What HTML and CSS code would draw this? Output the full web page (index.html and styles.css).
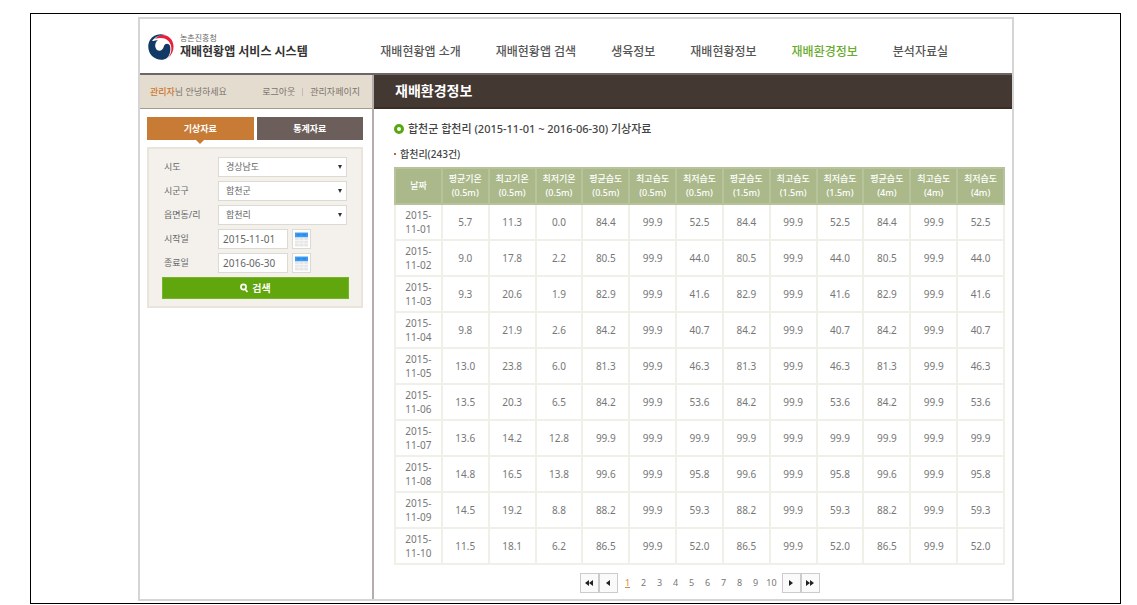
FILE: index.html
```html
<!DOCTYPE html>
<html lang="ko">
<head>
<meta charset="utf-8">
<title>재배현황앱 서비스 시스템</title>
<link rel="stylesheet" href="styles.css">
</head>
<body>
<div class="frame">
<div class="app">
  <header class="header">
    <a class="brand" href="#">
      <svg class="brand-mark" viewBox="0 0 26 26" aria-hidden="true">
        <path fill="#e8203c" d="M7 5C11 0 18 0 22 4c5 5 5 14-2 20 3-4 4-8 3-12-1-5-5-8-10-8-2 0-4 0-6 1z"/>
        <path fill="#123a66" d="M17 1C11-1 5 1 2 6-1 11 0 18 4 22c4 4 11 5 15 2 3-3 4-8 3-12-1-3-5-3-6 0-1 4-4 6-7 4-3-3-2-8 1-10C6 7 4 7 4 7 7 3 11 1 17 1z"/>
      </svg>
      <span class="brand-text"><span class="brand-org">농촌진흥청</span><strong class="brand-name">재배현황앱 서비스 시스템</strong></span>
    </a>
    <nav class="nav">
      <a href="#">재배현황앱 소개</a>
      <a href="#">재배현황앱 검색</a>
      <a href="#">생육정보</a>
      <a href="#">재배현황정보</a>
      <a href="#" class="current">재배환경정보</a>
      <a href="#">분석자료실</a>
    </nav>
  </header>
  <div class="columns">
    <aside class="side">
      <div class="user">
        <span><b>관리자</b>님 안녕하세요</span>
        <span class="user-links"><a href="#">로그아웃</a><i></i><a href="#">관리자페이지</a></span>
      </div>
      <div class="side-body">
        <div class="tabs">
          <button type="button" class="tab active">기상자료</button>
          <button type="button" class="tab">통계자료</button>
        </div>
        <form class="search">
          <div class="field"><label for="sido">시도</label><span class="select"><select id="sido"><option>경상남도</option></select></span></div>
          <div class="field"><label for="sigungu">시군구</label><span class="select"><select id="sigungu"><option>합천군</option></select></span></div>
          <div class="field"><label for="ri">읍면동/리</label><span class="select"><select id="ri"><option>합천리</option></select></span></div>
          <div class="field"><label for="from">시작일</label><input id="from" type="text" value="2015-11-01"><button type="button" class="cal" aria-label="시작일 선택"><svg viewBox="0 0 14 15"><path fill="#e6e6e6" d="M0 5h14v10H0z"/><path fill="#3b9cf5" d="M0 0h14v5H0z"/><path fill="#1c72c4" d="M2 2h4v1H2zM8 2h4v1H8z"/><path fill="#fff" d="M0 8h14v1H0zM0 11h14v1H0zM4 6h1v9H4zM9 6h1v9H9z" opacity=".6"/></svg></button></div>
          <div class="field"><label for="to">종료일</label><input id="to" type="text" value="2016-06-30"><button type="button" class="cal" aria-label="종료일 선택"><svg viewBox="0 0 14 15"><path fill="#e6e6e6" d="M0 5h14v10H0z"/><path fill="#3b9cf5" d="M0 0h14v5H0z"/><path fill="#1c72c4" d="M2 2h4v1H2zM8 2h4v1H8z"/><path fill="#fff" d="M0 8h14v1H0zM0 11h14v1H0zM4 6h1v9H4zM9 6h1v9H9z" opacity=".6"/></svg></button></div>
          <button type="submit" class="submit"><svg viewBox="0 0 8 10" aria-hidden="true"><circle cx="3.5" cy="4" r="2.6" fill="none" stroke="#fff" stroke-width="1.6"/><path stroke="#fff" stroke-width="1.8" d="M5 6l2.5 3"/></svg>검색</button>
        </form>
      </div>
    </aside>
    <main class="main">
      <h1 class="title">재배환경정보</h1>
      <div class="content">
        <h2 class="heading">합천군 합천리 (2015-11-01 ~ 2016-06-30) 기상자료</h2>
        <p class="count">합천리(243건)</p>
        <table class="data">
          <thead>
            <tr><th>날짜</th><th>평균기온<br>(0.5m)</th><th>최고기온<br>(0.5m)</th><th>최저기온<br>(0.5m)</th><th>평균습도<br>(0.5m)</th><th>최고습도<br>(0.5m)</th><th>최저습도<br>(0.5m)</th><th>평균습도<br>(1.5m)</th><th>최고습도<br>(1.5m)</th><th>최저습도<br>(1.5m)</th><th>평균습도<br>(4m)</th><th>최고습도<br>(4m)</th><th>최저습도<br>(4m)</th></tr>
          </thead>
          <tbody>
            <tr><td>2015-<br>11-01</td><td>5.7</td><td>11.3</td><td>0.0</td><td>84.4</td><td>99.9</td><td>52.5</td><td>84.4</td><td>99.9</td><td>52.5</td><td>84.4</td><td>99.9</td><td>52.5</td></tr>
            <tr><td>2015-<br>11-02</td><td>9.0</td><td>17.8</td><td>2.2</td><td>80.5</td><td>99.9</td><td>44.0</td><td>80.5</td><td>99.9</td><td>44.0</td><td>80.5</td><td>99.9</td><td>44.0</td></tr>
            <tr><td>2015-<br>11-03</td><td>9.3</td><td>20.6</td><td>1.9</td><td>82.9</td><td>99.9</td><td>41.6</td><td>82.9</td><td>99.9</td><td>41.6</td><td>82.9</td><td>99.9</td><td>41.6</td></tr>
            <tr><td>2015-<br>11-04</td><td>9.8</td><td>21.9</td><td>2.6</td><td>84.2</td><td>99.9</td><td>40.7</td><td>84.2</td><td>99.9</td><td>40.7</td><td>84.2</td><td>99.9</td><td>40.7</td></tr>
            <tr><td>2015-<br>11-05</td><td>13.0</td><td>23.8</td><td>6.0</td><td>81.3</td><td>99.9</td><td>46.3</td><td>81.3</td><td>99.9</td><td>46.3</td><td>81.3</td><td>99.9</td><td>46.3</td></tr>
            <tr><td>2015-<br>11-06</td><td>13.5</td><td>20.3</td><td>6.5</td><td>84.2</td><td>99.9</td><td>53.6</td><td>84.2</td><td>99.9</td><td>53.6</td><td>84.2</td><td>99.9</td><td>53.6</td></tr>
            <tr><td>2015-<br>11-07</td><td>13.6</td><td>14.2</td><td>12.8</td><td>99.9</td><td>99.9</td><td>99.9</td><td>99.9</td><td>99.9</td><td>99.9</td><td>99.9</td><td>99.9</td><td>99.9</td></tr>
            <tr><td>2015-<br>11-08</td><td>14.8</td><td>16.5</td><td>13.8</td><td>99.6</td><td>99.9</td><td>95.8</td><td>99.6</td><td>99.9</td><td>95.8</td><td>99.6</td><td>99.9</td><td>95.8</td></tr>
            <tr><td>2015-<br>11-09</td><td>14.5</td><td>19.2</td><td>8.8</td><td>88.2</td><td>99.9</td><td>59.3</td><td>88.2</td><td>99.9</td><td>59.3</td><td>88.2</td><td>99.9</td><td>59.3</td></tr>
            <tr><td>2015-<br>11-10</td><td>11.5</td><td>18.1</td><td>6.2</td><td>86.5</td><td>99.9</td><td>52.0</td><td>86.5</td><td>99.9</td><td>52.0</td><td>86.5</td><td>99.9</td><td>52.0</td></tr>
          </tbody>
        </table>
        <nav class="pager" aria-label="페이지">
          <button type="button" aria-label="처음"><svg viewBox="0 0 8 6"><path d="M4 0v6L0 3zM8 0v6L4 3z"/></svg></button>
          <button type="button" aria-label="이전"><svg viewBox="0 0 8 6"><path d="M6 0v6L2 3z"/></svg></button>
          <span class="pages"><a href="#" class="current">1</a><a href="#">2</a><a href="#">3</a><a href="#">4</a><a href="#">5</a><a href="#">6</a><a href="#">7</a><a href="#">8</a><a href="#">9</a><a href="#">10</a></span>
          <button type="button" aria-label="다음"><svg viewBox="0 0 8 6"><path d="M2 0v6l4-3z"/></svg></button>
          <button type="button" aria-label="마지막"><svg viewBox="0 0 8 6"><path d="M0 0v6l4-3zM4 0v6l4-3z"/></svg></button>
        </nav>
      </div>
    </main>
  </div>
</div>
</div>
</body>
</html>
```

FILE: styles.css
```css
*, ::before, ::after { box-sizing: border-box; }

body {
  margin: 0;
  padding: 13px 16px 0 30px;
  background: #fff;
  color: #666;
  font: 10px/14px "Noto Sans", "Noto Sans CJK KR", sans-serif;
}

a { color: inherit; text-decoration: none; }
h1, h2, p { margin: 0; }
button, input, select { font: inherit; color: inherit; border-radius: 0; }

.frame { border: 1px solid #000; padding: 3px 106px 2px 107px; }
.app { border: 2px solid #d5d5d5; }

.header {
  display: flex;
  align-items: center;
  justify-content: space-between;
  height: 56px;
  padding: 0 64px 0 8px;
  border-bottom: 2px solid #6b6768;
}
.brand { display: flex; align-items: center; gap: 6px; }
.brand-mark { width: 26px; height: 26px; margin-top: 2px; }
.brand-text { display: flex; flex-direction: column; }
.brand-org { font-size: 8px; line-height: 12px; }
.brand-name { font-size: 12px; line-height: 16px; color: #333; }
.nav {
  display: flex;
  gap: 35px;
  margin-top: 12px;
  font-size: 12px;
  line-height: 18px;
  font-weight: 500;
  color: #555;
}
.nav .current { color: #69ab2e; }

.columns { display: flex; }
.side { flex: 0 0 234px; border-right: 2px solid #b5adab; }
.user {
  display: flex;
  align-items: center;
  justify-content: space-between;
  height: 34px;
  padding: 0 12px 0 10px;
  background: #e4dccf;
  border-bottom: 1px solid #a39a94;
  font-size: 9px;
  color: #7b746d;
}
.user b { color: #cc7932; font-weight: 500; }
.user-links { display: flex; align-items: center; gap: 7px; }
.user-links i { width: 1px; height: 8px; background: #c5bcb0; }

.side-body { padding: 8px 9px 0 7px; }
.tabs { display: flex; gap: 3px; }
.tab {
  position: relative;
  flex: 1;
  height: 23px;
  padding: 0;
  border: 0;
  background: #6c5f5b;
  color: #fff;
  font-size: 9px;
  font-weight: 700;
}
.tab.active { background: #c87b35; }
.tab.active::after {
  content: "";
  position: absolute;
  left: 50%;
  top: 100%;
  margin-left: -4px;
  border: 4px solid transparent;
  border-top-color: #c87b35;
  border-bottom: 0;
}

.search {
  display: flex;
  flex-direction: column;
  gap: 4px;
  margin-top: 7px;
  padding: 8px 12px 7px 13px;
  border: 2px solid #e9e5db;
  background: #f4f1ec;
}
.field { display: flex; align-items: center; height: 20px; }
.field label { width: 56px; padding-left: 2px; font-size: 9px; color: #666; }
.select { position: relative; flex: 1; height: 20px; margin-right: 2px; }
.select::after {
  content: "";
  position: absolute;
  right: 5px;
  top: 8px;
  border: 2px solid transparent;
  border-top: 4px solid #333;
  border-bottom: 0;
}
.field select, .field input {
  height: 20px;
  border: 1px solid #ddd9d3;
  background: #fff;
  color: #666;
}
.field select { width: 100%; padding: 0 7px; appearance: none; font-size: 9px; }
.field input { width: 70px; padding: 0 4px; }
.cal {
  display: flex;
  justify-content: center;
  align-items: center;
  width: 19px;
  height: 20px;
  margin-left: 4px;
  padding: 0;
  border: 1px solid #ddd9d3;
  background: #fff;
}
.cal svg { width: 13px; height: 15px; }
.submit {
  display: flex;
  align-items: center;
  justify-content: center;
  gap: 4px;
  height: 22px;
  padding: 0;
  border: 1px solid #74b52a;
  background: #61a60c;
  color: #fff;
  font-weight: 700;
}
.submit svg { width: 8px; height: 10px; }

.main { flex: 1; min-width: 0; }
.title {
  height: 34px;
  padding: 0 21px;
  border-bottom: 2px solid #3a2d24;
  background: #433832;
  color: #fff;
  font-size: 14px;
  line-height: 32px;
}
.content { padding: 10px 7px 6px 20px; }
.heading {
  display: flex;
  align-items: center;
  gap: 4px;
  font-size: 11px;
  line-height: 20px;
  font-weight: 500;
  color: #444;
}
.heading::before {
  content: "";
  width: 10px;
  height: 10px;
  border: 3px solid #57a80f;
  border-radius: 50%;
}
.count {
  display: flex;
  align-items: center;
  gap: 4px;
  margin: 8px 0 6px;
  font-weight: 500;
  color: #444;
}
.count::before { content: ""; width: 2px; height: 2px; background: #c8632f; }

.data {
  width: 100%;
  table-layout: fixed;
  border-collapse: collapse;
  text-align: center;
  color: #777;
}
.data th, .data td { height: 36px; padding: 3px 0; border: 2px solid #eff1e8; }
.data th {
  border-color: #b7c39b;
  background: #aab88a;
  color: #fff;
  font-size: 9px;
  font-weight: 500;
}

.pager { display: flex; justify-content: center; align-items: center; margin-top: 8px; }
.pager button {
  display: flex;
  align-items: center;
  justify-content: center;
  width: 19px;
  height: 20px;
  padding: 0;
  border: 1px solid #ccc;
  background: #fafafa;
}
.pager svg { width: 8px; height: 6px; fill: #222; }
.pages { display: flex; padding: 0 2px; }
.pages a { width: 16px; text-align: center; font-size: 9px; color: #777; }
.pages .current { color: #d98a3d; text-decoration: underline; }
```
